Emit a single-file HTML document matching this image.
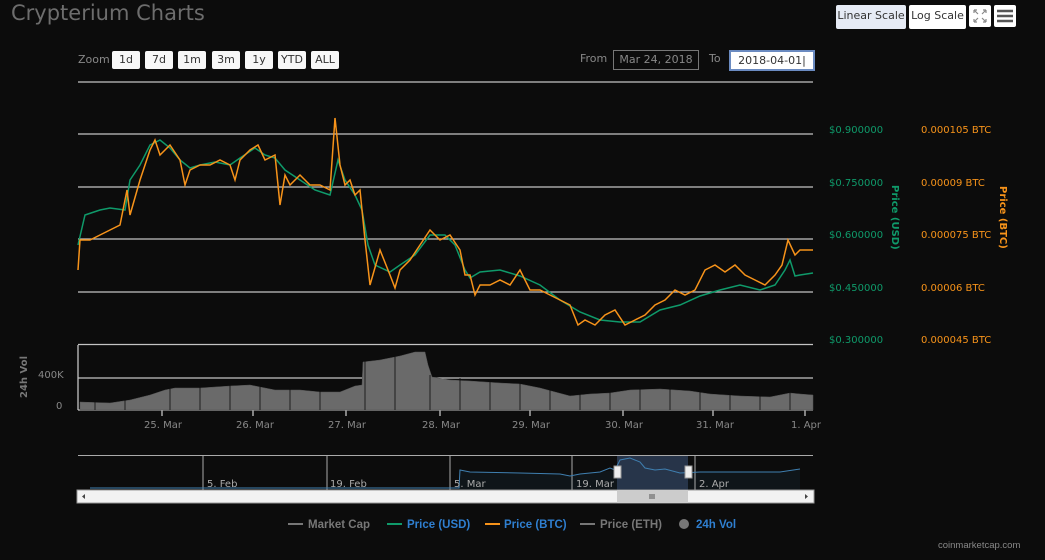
<!DOCTYPE html>
<html><head><meta charset="utf-8"><style>
body{margin:0;width:1045px;height:560px;background:#0c0c0c;font-family:"DejaVu Sans","Liberation Sans",sans-serif;overflow:hidden;position:relative}
.a{position:absolute;white-space:nowrap}
.btn{position:absolute;top:51px;height:18px;background:#f7f7f7;border-radius:2px;font-size:11px;color:#333;text-align:center;line-height:17px}
</style></head><body>
<div class="a" style="left:11px;top:1px;font-size:21px;color:#6d6d6d">Crypterium Charts</div>
<div class="a" style="left:78px;top:53px;font-size:11px;color:#888">Zoom</div>
<div class="btn" style="left:112px;width:28px">1d</div>
<div class="btn" style="left:145px;width:28px">7d</div>
<div class="btn" style="left:178px;width:28px">1m</div>
<div class="btn" style="left:212px;width:28px">3m</div>
<div class="btn" style="left:245px;width:28px">1y</div>
<div class="btn" style="left:278px;width:28px">YTD</div>
<div class="btn" style="left:311px;width:28px">ALL</div>
<div class="a" style="left:580px;top:52px;font-size:11px;color:#888">From</div>
<div class="a" style="left:613px;top:50px;width:84px;height:18px;border:1px solid #777;font-size:11px;color:#888;line-height:18px;text-align:center">Mar 24, 2018</div>
<div class="a" style="left:709px;top:52px;font-size:11px;color:#888">To</div>
<div class="a" style="left:729px;top:50px;border:2px solid #6a8ac0;background:#fff;font-size:11px;color:#333;line-height:18px;text-align:center;box-sizing:border-box;width:86px;height:21px">2018-04-01|</div>
<div class="a" style="left:836px;top:5px;width:70px;height:24px;background:#e6ebf5;border-radius:2px;font-size:11px;color:#333;line-height:22px;text-align:center">Linear Scale</div>
<div class="a" style="left:909px;top:5px;width:57px;height:24px;background:#fff;border-radius:2px;font-size:11px;color:#333;line-height:22px;text-align:center">Log Scale</div>
<div class="a" style="left:969px;top:5px;width:22px;height:22px;background:#fff;border-radius:2px"><svg width="22" height="22" stroke="#888" stroke-width="1.2" fill="none"><path d="M5 5l4 4M5 5h3M5 5v3M17 5l-4 4M17 5h-3M17 5v3M5 17l4-4M5 17h3M5 17v-3M17 17l-4-4M17 17h-3M17 17v-3"/></svg></div>
<div class="a" style="left:994px;top:5px;width:22px;height:22px;background:#fff;border-radius:2px"><svg width="22" height="22" stroke="#555" stroke-width="2.5"><path d="M3 6h16M3 11h16M3 16h16"/></svg></div>

<svg class="a" style="left:0;top:0" width="1045" height="560">
<g stroke="#c4c4c4" stroke-width="1.3">
<path d="M78 82H813M78 134H813M78 187H813M78 239H813M78 292H813M78 344.5H813M78 378H813M78 410H813"/>
<path d="M78 345V410"/>
<path d="M162 410v6M253 410v6M346 410v6M440 410v6M530 410v6M623 410v6M713 410v6M805 410v6"/>
</g>
<path fill="#6a6a6a" stroke="#555" stroke-width="0.5" d="M80 410V402L110 403L130 400L150 395L165 390L175 388L200 388L230 386L250 385L260 387L275 390L300 390L320 392L340 392L355 386L362 385L363 362L380 360L400 356L415 352L425 352L428 365L432 377L450 380L470 381L500 383L520 384L540 388L555 392L570 396L590 394L610 393L630 390L660 389L690 391L710 394L740 396L770 397L790 393L800 394L813 395V410Z"/>
<g stroke="#0c0c0c" stroke-width="0.8"><path d="M95 410V395M125 410V390M170 410V385M200 410V385M230 410V380M260 410V382M290 410V382M320 410V385M365 410V360M395 410V355M430 410V375M460 410V378M490 410V380M520 410V382M550 410V388M580 410V390M610 410V388M640 410V385M670 410V386M700 410V388M730 410V390M760 410V392M790 410V390"/></g>
<polyline fill="none" stroke="#0f9a6a" stroke-width="1.5" points="78,245 85,215 100,210 110,208 125,210 130,180 140,165 150,145 160,140 170,148 180,160 190,168 200,165 215,162 230,165 240,158 255,148 265,155 275,158 285,170 300,180 315,190 330,195 338,160 345,180 355,195 362,210 368,245 375,265 390,272 400,265 415,255 430,235 445,235 455,245 465,270 470,278 480,272 500,270 520,276 540,285 560,300 580,312 600,320 620,322 640,322 660,310 680,305 700,296 720,290 740,285 760,290 775,285 785,270 790,260 795,276 800,275 813,273"/>
<polyline fill="none" stroke="#f7931a" stroke-width="1.5" points="78,270 80,240 90,240 100,235 110,230 120,225 127,190 130,215 140,180 150,150 155,140 160,155 170,145 180,160 185,185 190,170 200,165 210,165 220,160 230,165 235,180 240,160 250,150 258,145 265,160 275,155 280,205 285,175 290,185 300,175 310,185 320,185 330,190 335,118 340,165 345,185 350,180 355,195 360,190 365,240 370,285 380,250 390,275 395,288 400,270 410,260 420,245 430,230 440,240 450,235 460,250 465,275 470,275 475,295 480,285 490,285 500,280 510,285 520,270 530,290 540,290 550,295 560,300 570,305 578,325 585,320 595,325 605,315 615,310 625,325 635,320 645,315 655,305 665,300 675,290 685,295 695,290 705,270 715,265 725,272 735,265 745,275 755,280 765,285 775,275 782,265 788,240 795,255 800,250 813,250"/>
<g font-size="10" fill="#0f9a6a"><text x="829" y="133">$0.900000</text><text x="829" y="186">$0.750000</text><text x="829" y="238">$0.600000</text><text x="829" y="291">$0.450000</text><text x="829" y="343">$0.300000</text></g>
<g font-size="10" fill="#f7931a"><text x="921" y="133">0.000105 BTC</text><text x="921" y="186">0.00009 BTC</text><text x="921" y="238">0.000075 BTC</text><text x="921" y="291">0.00006 BTC</text><text x="921" y="343">0.000045 BTC</text></g>
<text transform="translate(892,185) rotate(90)" font-size="10" font-weight="bold" fill="#0f9a6a">Price (USD)</text>
<text transform="translate(1000,186) rotate(90)" font-size="10" font-weight="bold" fill="#f7931a">Price (BTC)</text>
<text transform="translate(27,398) rotate(-90)" font-size="10" font-weight="bold" fill="#777">24h Vol</text>
<g font-size="10" fill="#888"><text x="38" y="378">400K</text><text x="56" y="409">0</text>
<text x="144" y="428">25. Mar</text><text x="236" y="428">26. Mar</text><text x="328" y="428">27. Mar</text><text x="422" y="428">28. Mar</text><text x="512" y="428">29. Mar</text><text x="605" y="428">30. Mar</text><text x="696" y="428">31. Mar</text><text x="791" y="428">1. Apr</text></g>
<path fill="#0f1519" d="M459 490V470L470 472L520 473L560 474L570 476L580 474L600 472L613 470L625 458L640 463L660 468L680 472L700 472L740 472L780 472L800 469V490Z"/>
<rect x="617" y="455" width="71" height="35" fill="#2a3850" opacity="0.9"/>
<g stroke="#aaa" stroke-width="1"><path d="M78 455.5H813M203 455V490M327 455V490M450 455V490M572 455V490M695 455V490"/></g>
<polyline fill="none" stroke="#3f7fb0" stroke-width="1" points="90,488 459,488 460,470 470,472 520,473 560,474 570,476 580,474 600,472 610,468 615,470 620,460 630,458 640,462 645,468 655,470 665,469 680,473 700,472 740,472 780,472 800,469"/>
<g font-size="10" fill="#aaa"><text x="207" y="487">5. Feb</text><text x="330" y="487">19. Feb</text><text x="454" y="487">5. Mar</text><text x="576" y="487">19. Mar</text><text x="699" y="487">2. Apr</text></g>
<rect x="614" y="466" width="7" height="12" fill="#eee" stroke="#999"/><rect x="685" y="466" width="7" height="12" fill="#eee" stroke="#999"/>
<rect x="77" y="490" width="737" height="13" fill="#f2f2f2" stroke="#999"/>
<rect x="617" y="490" width="71" height="13" fill="#ccc"/>
<path d="M650 494v5M652 494v5M654 494v5" stroke="#555"/>
<path d="M85 494l-3 2.5 3 2.5zM805 494l3 2.5-3 2.5z" fill="#444"/>
<g font-size="11.5" font-weight="bold" font-family="Liberation Sans, sans-serif">
<path d="M288 524h15" stroke="#777" stroke-width="2"/><text x="308" y="528" fill="#777">Market Cap</text>
<path d="M387 524h15" stroke="#0f9a6a" stroke-width="2"/><text x="407" y="528" fill="#2f7fd0">Price (USD)</text>
<path d="M485 524h15" stroke="#f7931a" stroke-width="2"/><text x="504" y="528" fill="#2f7fd0">Price (BTC)</text>
<path d="M580 524h15" stroke="#777" stroke-width="2"/><text x="600" y="528" fill="#777">Price (ETH)</text>
<circle cx="684" cy="524" r="5" fill="#777"/><text x="696" y="528" fill="#2f7fd0">24h Vol</text></g>
<text x="938" y="548" font-size="9.5" fill="#888" font-family="Liberation Sans, sans-serif">coinmarketcap.com</text>
</svg>
</body></html>
